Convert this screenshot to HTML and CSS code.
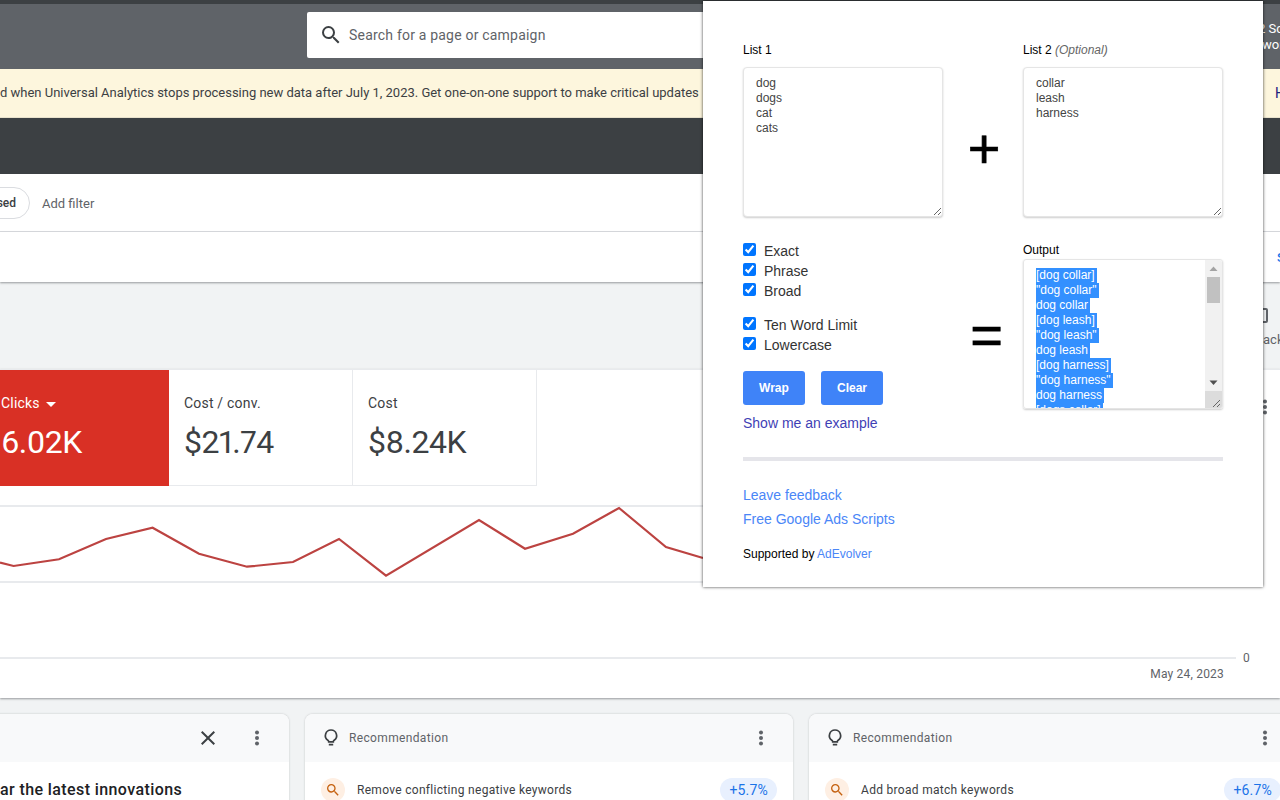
FILE: index.html
```html
<!DOCTYPE html>
<html lang="en">
<head>
<meta charset="utf-8">
<title>Keyword Wrapper</title>
<link rel="stylesheet" href="styles.css">
</head>
<body>
<div class="page">
  <div class="topstrip"></div>
  <header class="header">
    <div class="search">
      <svg class="search-icon" width="24" height="24" viewBox="0 0 24 24"><path d="M15.5 14h-.79l-.28-.27A6.47 6.47 0 0 0 16 9.5 6.5 6.5 0 1 0 9.5 16c1.61 0 3.09-.59 4.23-1.57l.27.28v.79l5 4.99L20.49 19l-4.99-5zm-6 0C7.01 14 5 11.99 5 9.5S7.01 5 9.5 5 14 7.01 14 9.5 11.99 14 9.5 14z"/></svg>
      <span>Search for a page or campaign</span>
    </div>
    <div class="account"><div class="account-first">2 Sc</div><div>wor</div></div>
  </header>
  <div class="banner">
    <span>d when Universal Analytics stops processing new data after July 1, 2023. Get one-on-one support to make critical updates</span>
    <span class="banner-link">H</span>
  </div>
  <div class="darkbar"></div>
  <div class="filters">
    <span class="chip">sed</span>
    <span class="addfilter">Add filter</span>
  </div>
  <div class="subbar"><span class="subbar-link">S</span></div>
  <div class="graysec">
    <div class="sidetool"><span class="sidetool-icon"></span><span class="sidetool-label">ack</span></div>
  </div>
  <section class="chartcard">
    <div class="tiles">
      <div class="tile tile-red">
        <div class="tile-label">Clicks <span class="caret"></span></div>
        <div class="tile-value">6.02K</div>
      </div>
      <div class="tile">
        <div class="tile-label">Cost / conv.</div>
        <div class="tile-value">$21.74</div>
      </div>
      <div class="tile">
        <div class="tile-label">Cost</div>
        <div class="tile-value">$8.24K</div>
      </div>
      <svg class="tiles-menu" width="6" height="16" viewBox="0 0 6 16"><circle cx="3" cy="2.5" r="2"/><circle cx="3" cy="8" r="2"/><circle cx="3" cy="13.5" r="2"/></svg>
    </div>
    <svg class="chart" width="1280" height="212" viewBox="0 486 1280 212">
      <line class="grid" x1="0" y1="506" x2="1236" y2="506"/>
      <line class="grid" x1="0" y1="582" x2="1236" y2="582"/>
      <line class="grid" x1="0" y1="658" x2="1236" y2="658"/>
      <polyline class="series" points="0,562.5 13.6,566 59,559.3 106,539 152.6,527.7 199,553.7 247,566.7 293,562 339,539 386,575.7 479,520 525,548.7 573,533.7 619,508 666,547 703,558"/>
      <text class="axis" x="1243" y="662">0</text>
      <text class="axis axis-date" x="1224" y="678" text-anchor="end">May 24, 2023</text>
    </svg>
  </section>
  <div class="cards">
    <article class="card card-first">
      <div class="card-head">
        <span class="grow"></span>
        <svg class="close" width="24" height="24" viewBox="0 0 24 24"><path d="M19 6.41 17.59 5 12 10.59 6.41 5 5 6.41 10.59 12 5 17.59 6.41 19 12 13.41 17.59 19 19 17.59 13.41 12z"/></svg>
        <svg class="dots" width="6" height="16" viewBox="0 0 6 16"><circle cx="3" cy="2.5" r="2"/><circle cx="3" cy="8" r="2"/><circle cx="3" cy="13.5" r="2"/></svg>
      </div>
      <div class="card-body-title">ar the latest innovations</div>
    </article>
    <article class="card">
      <div class="card-head">
        <svg class="bulb" width="18" height="20" viewBox="0 0 18 20"><path d="M9 2a5.6 5.6 0 0 0-3.2 10.2c.5.4.9 1 .9 1.6h4.6c0-.6.4-1.2.9-1.6A5.6 5.6 0 0 0 9 2z"/><path d="M6.8 16.6h4.4"/></svg>
        <span class="card-kind">Recommendation</span>
        <span class="grow"></span>
        <svg class="dots" width="6" height="16" viewBox="0 0 6 16"><circle cx="3" cy="2.5" r="2"/><circle cx="3" cy="8" r="2"/><circle cx="3" cy="13.5" r="2"/></svg>
      </div>
      <div class="card-row">
        <span class="badge"><svg width="16" height="16" viewBox="0 0 24 24"><path d="M15.5 14h-.79l-.28-.27A6.47 6.47 0 0 0 16 9.5 6.5 6.5 0 1 0 9.5 16c1.61 0 3.09-.59 4.23-1.57l.27.28v.79l5 4.99L20.49 19l-4.99-5zm-6 0C7.01 14 5 11.99 5 9.5S7.01 5 9.5 5 14 7.01 14 9.5 11.99 14 9.5 14z"/></svg></span>
        <span class="card-text">Remove conflicting negative keywords</span>
        <span class="grow"></span>
        <span class="pill">+5.7%</span>
      </div>
    </article>
    <article class="card">
      <div class="card-head">
        <svg class="bulb" width="18" height="20" viewBox="0 0 18 20"><path d="M9 2a5.6 5.6 0 0 0-3.2 10.2c.5.4.9 1 .9 1.6h4.6c0-.6.4-1.2.9-1.6A5.6 5.6 0 0 0 9 2z"/><path d="M6.8 16.6h4.4"/></svg>
        <span class="card-kind">Recommendation</span>
        <span class="grow"></span>
        <svg class="dots" width="6" height="16" viewBox="0 0 6 16"><circle cx="3" cy="2.5" r="2"/><circle cx="3" cy="8" r="2"/><circle cx="3" cy="13.5" r="2"/></svg>
      </div>
      <div class="card-row">
        <span class="badge"><svg width="16" height="16" viewBox="0 0 24 24"><path d="M15.5 14h-.79l-.28-.27A6.47 6.47 0 0 0 16 9.5 6.5 6.5 0 1 0 9.5 16c1.61 0 3.09-.59 4.23-1.57l.27.28v.79l5 4.99L20.49 19l-4.99-5zm-6 0C7.01 14 5 11.99 5 9.5S7.01 5 9.5 5 14 7.01 14 9.5 11.99 14 9.5 14z"/></svg></span>
        <span class="card-text">Add broad match keywords</span>
        <span class="grow"></span>
        <span class="pill">+6.7%</span>
      </div>
    </article>
  </div>
</div>

<aside class="popup">
  <div class="lists">
    <div class="field">
      <label class="field-label" for="list1">List 1</label>
      <textarea id="list1" class="box" readonly>dog
dogs
cat
cats</textarea>
    </div>
    <div class="symbol symbol-plus">+</div>
    <div class="field">
      <label class="field-label" for="list2">List 2 <em>(Optional)</em></label>
      <textarea id="list2" class="box" readonly>collar
leash
harness</textarea>
    </div>
  </div>
  <div class="lists lists-second">
    <div class="options">
      <div class="checkgroup">
        <label class="check"><input type="checkbox" checked>Exact</label>
        <label class="check"><input type="checkbox" checked>Phrase</label>
        <label class="check"><input type="checkbox" checked>Broad</label>
      </div>
      <div class="checkgroup">
        <label class="check"><input type="checkbox" checked>Ten Word Limit</label>
        <label class="check"><input type="checkbox" checked>Lowercase</label>
      </div>
      <div class="buttons">
        <button class="btn" type="button">Wrap</button>
        <button class="btn" type="button">Clear</button>
      </div>
      <a class="example" href="#">Show me an example</a>
    </div>
    <div class="symbol symbol-equal">=</div>
    <div class="field">
      <div class="field-label field-label-out">Output</div>
      <div class="outbox">
        <div class="outtext"><span>[dog collar]</span><span>"dog collar"</span><span>dog collar</span><span>[dog leash]</span><span>"dog leash"</span><span>dog leash</span><span>[dog harness]</span><span>"dog harness"</span><span>dog harness</span><span>[dogs collar]</span></div>
        <div class="scrollbar">
          <svg class="arrow" width="17" height="17" viewBox="0 0 17 17"><path class="arrow-up" d="M4.5 11 8.5 6.5 12.5 11z"/></svg>
          <div class="thumb"></div>
          <div class="track"></div>
          <svg class="arrow" width="17" height="17" viewBox="0 0 17 17"><path d="M4.5 6.5h8L8.5 11z"/></svg>
          <svg class="corner" width="17" height="17" viewBox="0 0 17 17"><path d="M15 9 8 16M15 13l-3 3"/></svg>
        </div>
      </div>
    </div>
  </div>
  <div class="divider"></div>
  <div class="links">
    <a href="#">Leave feedback</a>
    <a href="#">Free Google Ads Scripts</a>
  </div>
  <div class="support">Supported by <a href="#">AdEvolver</a></div>
</aside>
</body>
</html>
```
FILE: styles.css
```css
* { box-sizing: border-box; }
html, body { margin: 0; height: 800px; overflow: hidden; background: #fff; }
body { font-family: Roboto, "Liberation Sans", sans-serif; color: #3c4043; }
.page { width: 1280px; height: 800px; overflow: hidden; background: #f1f3f4; }
.grow { flex: 1; }

.topstrip { height: 4px; background: #3c4043; }
.header { height: 65px; background: #5f6368; display: flex; padding: 8px 0 0 307px; overflow: hidden; }
.search { flex: none; width: 800px; height: 46px; background: #fff; border-radius: 2px; display: flex; align-items: center; padding-left: 12px; gap: 6px; font-size: 14px; letter-spacing: .2px; color: #5f6368; }
.search-icon { fill: #3c4043; flex: none; }
.account { flex: none; margin: 9px 0 0 155px; color: #fff; font-size: 13px; line-height: 16px; white-space: nowrap; }
.account-first { text-indent: -4px; }
.banner { height: 49px; padding-bottom: 2px; background: #fdf6dd; display: flex; align-items: center; justify-content: space-between; font-size: 13px; letter-spacing: -.01px; color: #3c4043; white-space: nowrap; overflow: hidden; border-bottom: 1px solid #e8e2cc; }
.banner-link { color: #1a237e; font-size: 14px; margin: 2px -4px 0 0; width: 9px; }
.darkbar { height: 56px; background: #3c4043; }
.filters { height: 58px; background: #fff; border-bottom: 1px solid #dadce0; display: flex; align-items: center; padding-top: 1px; }
.chip { height: 32px; width: 50px; margin-left: -20px; border: 1px solid #dadce0; border-radius: 16px; display: flex; align-items: center; justify-content: flex-end; padding-right: 13px; font-size: 12px; font-weight: 500; }
.addfilter { margin-left: 12px; font-size: 13px; color: #5f6368; }
.subbar { height: 50px; background: #fff; box-shadow: 0 1px 2px rgba(60,64,67,.5); display: flex; align-items: center; justify-content: flex-end; position: relative; }
.subbar-link { color: #1a73e8; font-size: 13px; font-weight: 500; margin-right: -4px; width: 7px; }
.graysec { height: 87px; display: flex; justify-content: flex-end; overflow: hidden; }
.sidetool { width: 22px; margin-right: -5px; padding-top: 26px; display: flex; flex-direction: column; }
.sidetool-icon { width: 10px; height: 15px; margin-left: -5px; border: 2px solid #5f6368; border-radius: 2px; }
.sidetool-label { margin-top: 9px; font-size: 13px; line-height: 16px; color: #5f6368; }
.chartcard { height: 329px; background: #fff; box-shadow: 0 1px 2px rgba(60,64,67,.5); border-top: 1px solid #e8eaed; position: relative; }
.tiles { display: flex; height: 116px; }
.tile { width: 184px; height: 116px; padding: 25px 0 0 15px; border-right: 1px solid #e8eaed; border-bottom: 1px solid #e8eaed; color: #3c4043; }
.tile-red { width: 169px; padding-left: 1px; background: #d93025; color: #fff; border: 0; }
.tile-label { font-size: 14px; line-height: 16px; letter-spacing: .2px; display: flex; align-items: center; gap: 6px; }
.caret { width: 0; height: 0; border: 5px solid transparent; border-top-color: #fff; border-bottom: 0; margin-top: 2px; }
.tile-value { margin-top: 12px; font-size: 32px; line-height: 38px; font-variant-numeric: proportional-nums; letter-spacing: -.5px; }
.tiles-menu { fill: #5f6368; margin: 29px 0 0 725px; flex: none; }
.chart { display: block; }
.grid { stroke: #e8eaed; stroke-width: 2; }
.series { fill: none; stroke: #bc4341; stroke-width: 2.2; }
.axis { font-size: 12px; fill: #5f6368; }
.axis-date { letter-spacing: .2px; }
.cards { display: flex; gap: 16px; margin: 16px 0 0 -199px; }
.card { flex: none; width: 488px; height: 110px; background: #fff; border-radius: 8px; box-shadow: 0 0 2px rgba(60,64,67,.3); overflow: hidden; }
.card-head { height: 48px; background: #f8f9fa; display: flex; align-items: center; padding: 0 29px 0 17px; }
.close { fill: #3c4043; margin-right: 34px; flex: none; }
.dots { fill: #5f6368; flex: none; }
.bulb { fill: none; stroke: #3c4043; stroke-width: 1.7; flex: none; }
.card-kind { margin-left: 9px; font-size: 12px; letter-spacing: .35px; color: #5f6368; }
.card-body-title { padding: 18px 0 0 199px; font-size: 16px; line-height: 20px; font-weight: 500; letter-spacing: .4px; color: #202124; }
.card-row { display: flex; align-items: center; padding: 16px 16px 0 16px; }
.badge { width: 24px; height: 24px; border-radius: 50%; background: #feefe3; display: flex; align-items: center; justify-content: center; fill: #c5610f; flex: none; }
.card-text { margin-left: 12px; font-size: 12px; letter-spacing: .3px; color: #3c4043; }
.pill { height: 24px; padding: 0 9px; border-radius: 12px; background: #e8f0fe; color: #1a73e8; font-size: 14px; line-height: 24px; letter-spacing: .2px; }

.popup { position: absolute; left: 703px; top: 1px; width: 560px; height: 586px; padding: 42px 40px 0; background: #fff; box-shadow: 0 0 3px rgba(0,0,0,.75); font-family: "Liberation Sans", Arial, sans-serif; color: #000; }
.lists { display: grid; grid-template-columns: 200px 80px 200px; }
.lists-second { margin-top: 24px; }
.field { display: flex; flex-direction: column; }
.field-label { font-size: 12px; line-height: 14px; height: 24px; }
.field-label em { color: #666; }
.field-label-out { height: 16px; margin-top: 2px; }
.box { width: 200px; height: 150px; padding: 8px 12px; border: 1px solid #e5e5e5; border-radius: 4px; box-shadow: 0 1px 2px rgba(0,0,0,.2); font: 12px/15px "Liberation Sans", Arial, sans-serif; color: #444; resize: both; outline: 0; }
.symbol { text-align: center; color: #000; font-weight: 400; font-size: 56px; line-height: 1; -webkit-text-stroke: .7px #000; }
.symbol-plus { margin: 78px 0 0 2px; }
.symbol-equal { margin: 66px 0 0 7px; }
.options { display: flex; flex-direction: column; }
.checkgroup { margin-bottom: 14px; }
.check { display: flex; height: 20px; font-size: 14px; line-height: 20px; color: #333; }
.check input { width: 13px; height: 13px; margin: 2px 8px 0 0; accent-color: #0075ff; }
.buttons { display: flex; gap: 16px; margin-top: 2px; }
.btn { width: 62px; height: 34px; padding: 0; border: 0; border-radius: 3px; background: #3f83f8; color: #fff; font: 700 12px "Liberation Sans", Arial, sans-serif; }
.example { margin-top: 10px; font-size: 14px; line-height: 16px; color: #3f3fb5; text-decoration: none; }
.outbox { width: 200px; height: 150px; display: flex; border: 1px solid #e5e5e5; border-radius: 3px; box-shadow: 0 1px 2px rgba(0,0,0,.2); overflow: hidden; }
.outtext { flex: 1; padding: 8px 12px; font-size: 12px; line-height: 15px; color: #fff; white-space: nowrap; overflow: hidden; }
.outtext span { display: block; width: fit-content; background: #3390ff; padding-right: 2px; }
.scrollbar { flex: none; width: 17px; background: #f1f1f1; display: flex; flex-direction: column; }
.arrow { flex: none; fill: #505050; display: block; }
.arrow-up { fill: #a3a3a3; }
.thumb { flex: none; height: 26px; margin-left: 2px; width: 13px; background: #c1c1c1; }
.track { flex: 1; }
.corner { flex: none; background: #dcdcdc; stroke: #666; stroke-width: 1; fill: none; display: block; }
.divider { height: 4px; margin-top: 26px; background: #e5e5ea; }
.links { display: flex; flex-direction: column; margin-top: 22px; }
.links a { font-size: 14px; line-height: 24px; color: #4a86f7; text-decoration: none; }
.support { margin-top: 15px; font-size: 12px; line-height: 16px; }
.support a { color: #4a86f7; text-decoration: none; }
```
